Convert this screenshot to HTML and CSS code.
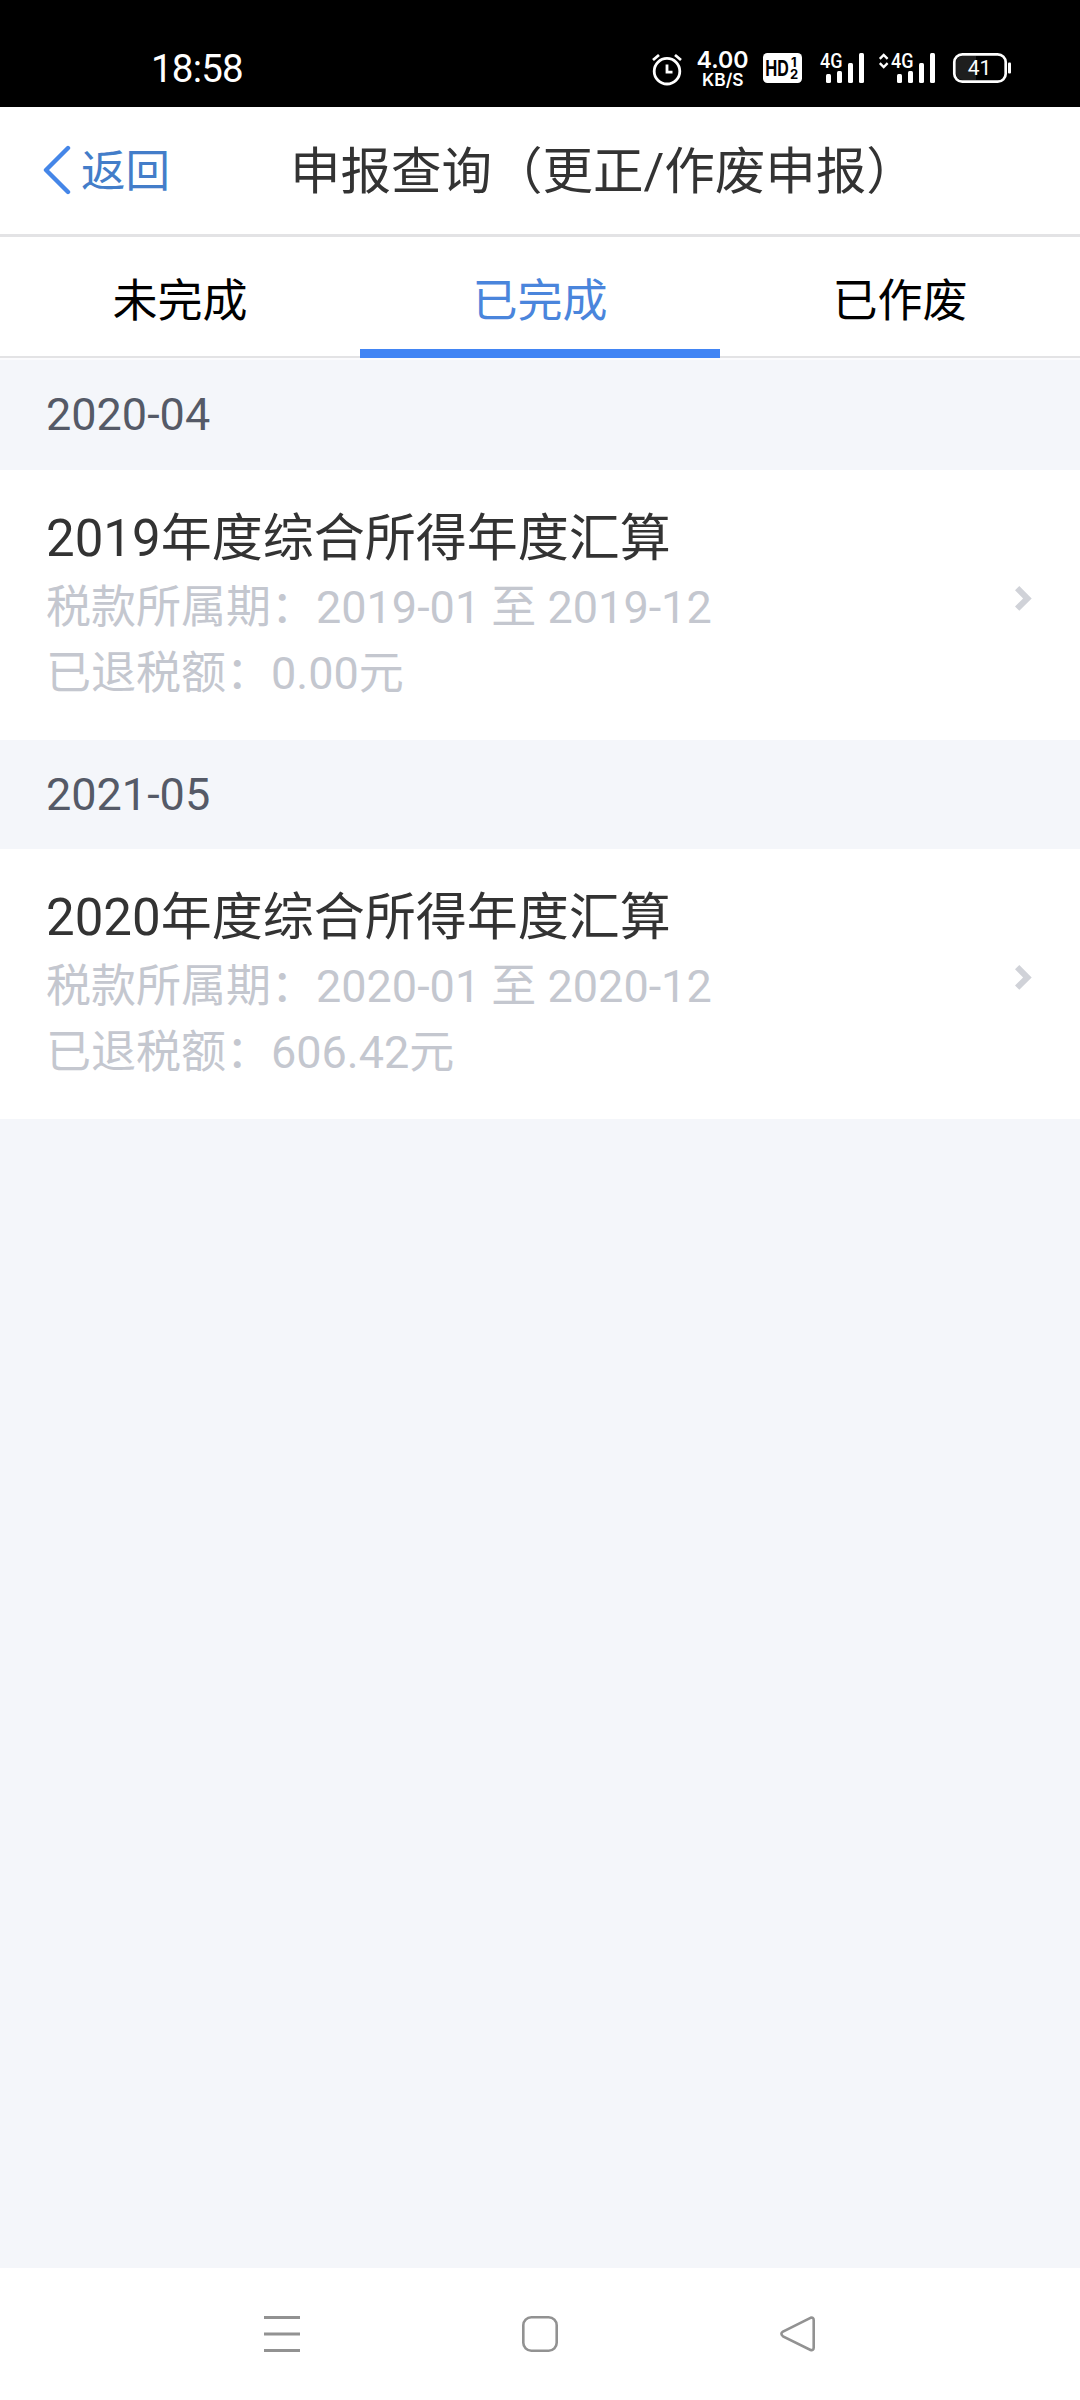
FILE: index.html
```html
<!DOCTYPE html>
<html lang="zh-CN">
<head>
    <meta charset="UTF-8">
    <meta name="viewport" content="width=device-width, initial-scale=1.0">
    <title>申报查询</title>
    <link rel="stylesheet" href="styles.css">
</head>
<body>
    <div class="status-bar">
        <span class="time">18:58</span>
        <svg class="status-icons" width="370" height="46" viewBox="648 46 370 46">
            <!-- alarm -->
            <g fill="none" stroke="#fff" stroke-width="2.8">
                <circle cx="667" cy="71.2" r="12.8"/>
                <path d="M667 64.5v7.7h5.5"/>
                <path d="M653 60l6-5M681 60l-6-5"/>
            </g>
            <!-- network speed -->
            <g fill="#fff" class="speed">
                <text x="696.5" y="67.8" font-size="23.5" textLength="52" lengthAdjust="spacingAndGlyphs">4.00</text>
                <text x="702" y="85.8" font-size="17.5" textLength="41.5" lengthAdjust="spacingAndGlyphs">KB/S</text>
            </g>
            <!-- HD -->
            <rect x="763" y="53" width="39" height="30" rx="4.5" fill="#fff"/>
            <g fill="#000" class="hd">
                <text x="765.3" y="76" font-size="21.5" textLength="23.6" lengthAdjust="spacingAndGlyphs">HD</text>
                <text x="791" y="67.3" font-size="13">1</text>
                <text x="790" y="78.5" font-size="13">2</text>
            </g>
            <!-- signal 1 -->
            <g fill="#fff">
                <text class="net" x="820" y="67.6" font-size="19.5" textLength="22.5" lengthAdjust="spacingAndGlyphs">4G</text>
                <rect x="826" y="74" width="5" height="9" rx="1.5"/>
                <rect x="837" y="71" width="5" height="12" rx="1.5"/>
                <rect x="848" y="63" width="5" height="20" rx="1.5"/>
                <rect x="859" y="53" width="5" height="30" rx="1.5"/>
            </g>
            <!-- signal 2 -->
            <g fill="#fff">
                <path d="M879.8 58.8l3.9-3.8 3.9 3.8M879.8 63.2l3.9 3.8 3.9-3.8" fill="none" stroke="#fff" stroke-width="2.4"/>
                <text class="net" x="891" y="67.6" font-size="19.5" textLength="22.5" lengthAdjust="spacingAndGlyphs">4G</text>
                <rect x="897" y="74" width="5" height="9" rx="1.5"/>
                <rect x="908" y="71" width="5" height="12" rx="1.5"/>
                <rect x="919" y="63" width="5" height="20" rx="1.5"/>
                <rect x="930" y="53" width="5" height="30" rx="1.5"/>
            </g>
            <!-- battery -->
            <path d="M976 56h-13q-7 0-7 7v10q0 7 7 7h13z" fill="#1e1e1e"/>
            <rect x="954.3" y="54.3" width="51.4" height="27.4" rx="8" fill="none" stroke="#fff" stroke-width="2.7"/>
            <rect x="1008" y="62.5" width="3" height="11" rx="1" fill="#fff"/>
            <text class="battery" x="979.5" y="75.2" font-size="21" fill="#fff" text-anchor="middle">41</text>
        </svg>
    </div>

    <header class="header">
        <a class="back">
            <svg width="28" height="50" viewBox="0 0 28 50">
                <path d="M25 3L3 25l22 22" fill="none" stroke="#4586e8" stroke-width="4.4" stroke-linecap="round" stroke-linejoin="round"/>
            </svg>
            <span>返回</span>
        </a>
        <h1>申报查询（更正/作废申报）</h1>
    </header>

    <nav class="tabs">
        <div class="tab">未完成</div>
        <div class="tab active">已完成</div>
        <div class="tab">已作废</div>
    </nav>

    <main class="list">
        <div class="month first">2020-04</div>
        <div class="item">
            <div class="item-details">
                <h2>2019年度综合所得年度汇算</h2>
                <p>税款所属期：2019-01 至 2019-12</p>
                <p>已退税额：0.00元</p>
            </div>
            <svg class="arrow" width="17" height="25" viewBox="0 0 17 25">
                <path d="M4.3 0L16.7 12.4 4.3 24.8 0 20.5l8.1-8.1L0 4.3z" fill="#d0d2d8"/>
            </svg>
        </div>
        <div class="month">2021-05</div>
        <div class="item">
            <div class="item-details">
                <h2>2020年度综合所得年度汇算</h2>
                <p>税款所属期：2020-01 至 2020-12</p>
                <p>已退税额：606.42元</p>
            </div>
            <svg class="arrow" width="17" height="25" viewBox="0 0 17 25">
                <path d="M4.3 0L16.7 12.4 4.3 24.8 0 20.5l8.1-8.1L0 4.3z" fill="#d0d2d8"/>
            </svg>
        </div>
    </main>

    <footer class="nav-bar">
        <svg width="36" height="36" viewBox="0 0 36 36">
            <path d="M0 1.5h36M0 18h36M0 34.5h36" stroke="#929292" stroke-width="3"/>
        </svg>
        <svg width="36" height="36" viewBox="0 0 36 36">
            <rect x="1.3" y="1.3" width="33.4" height="33.4" rx="8" fill="none" stroke="#929292" stroke-width="2.6"/>
        </svg>
        <svg width="36" height="36" viewBox="0 0 36 36">
            <path d="M30.5 1.8L3 15.5q-3.2 2.3 0 4.8l27.5 13.7q3.2.8 3.2-2.5V4.3q0-3.3-3.2-2.5z" fill="none" stroke="#929292" stroke-width="2.6"/>
        </svg>
    </footer>
</body>
</html>
```

FILE: styles.css
```css
* {
    box-sizing: border-box;
}

body {
    display: flex;
    flex-direction: column;
    height: 2400px;
    margin: 0;
    font-family: Roboto, "Noto Sans CJK SC", sans-serif;
    background-color: #f4f6fa;
}

h1, h2, p {
    margin: 0;
    font-weight: 400;
}

svg {
    display: block;
    flex-shrink: 0;
}

.status-bar {
    display: flex;
    justify-content: space-between;
    height: 107px;
    padding: 46px 62px 0 151px;
    background-color: #000;
    color: #fff;
}

.time {
    font-size: 38.5px;
    line-height: 45px;
    letter-spacing: -0.8px;
}

.speed {
    font-family: Inter, sans-serif;
    font-weight: 600;
}

.hd {
    font-family: Inter, sans-serif;
    font-weight: 700;
}

.net {
    font-family: Roboto, sans-serif;
    font-weight: 500;
}

.battery {
    font-family: Roboto, sans-serif;
}

.header {
    display: flex;
    align-items: center;
    height: 130px;
    padding-left: 43px;
    background-color: #fff;
    border-bottom: 3px solid #e3e3e5;
}

.back {
    display: flex;
    align-items: center;
    gap: 10px;
    width: 247px;
    font-size: 44.5px;
    color: #437dc9;
}

.back svg {
    margin-bottom: 2px;
}

.back span {
    padding-bottom: 6px;
}

.header h1 {
    padding-bottom: 8px;
    font-size: 50.5px;
    color: #333;
    white-space: nowrap;
}

.tabs {
    display: flex;
    height: 121px;
    background-color: #fff;
    border-bottom: 2px solid #e3e3e5;
}

.tab {
    flex: 1;
    height: 121px;
    font-size: 45px;
    line-height: 129px;
    text-align: center;
    color: #000;
}

.tab.active {
    color: #4a85dc;
    border-bottom: 9px solid #4285f4;
}

.month {
    height: 109px;
    padding-left: 46px;
    font-size: 45px;
    line-height: 109px;
    color: #555a67;
}

.month.first {
    height: 112px;
    line-height: 109px;
    border-top: 2px solid #fbfbfd;
}

.item {
    display: flex;
    justify-content: space-between;
    height: 270px;
    padding: 32px 48px 0 46px;
    background-color: #fff;
}

.item h2 {
    font-size: 51px;
    line-height: 73px;
    color: #333;
}

.item p {
    font-size: 45px;
    line-height: 66px;
    color: #c4c7cf;
}

.arrow {
    margin-top: 84px;
}

.nav-bar {
    display: flex;
    justify-content: center;
    gap: 222px;
    height: 132px;
    margin-top: auto;
    padding-top: 48px;
    background-color: #fff;
}
```
